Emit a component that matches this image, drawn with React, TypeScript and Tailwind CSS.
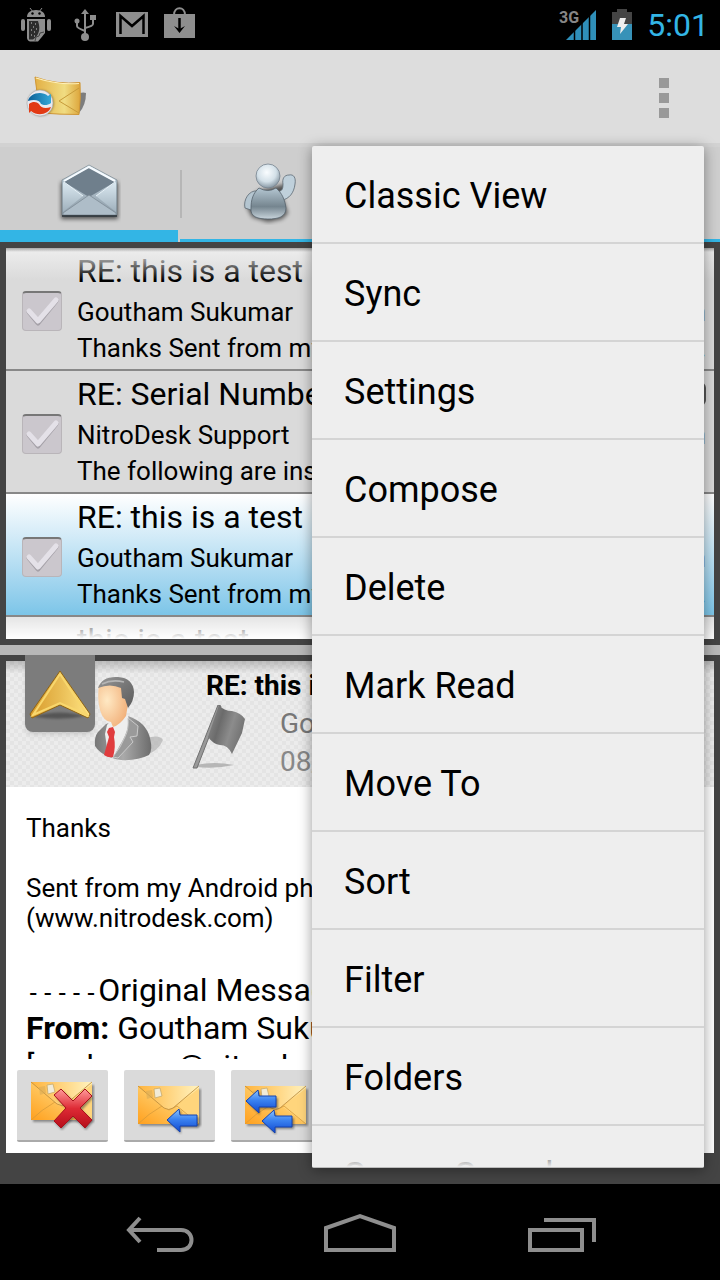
import { useState } from 'react';

const menuItems = [
  'Classic View', 'Sync', 'Settings', 'Compose', 'Delete', 'Mark Read',
  'Move To', 'Sort', 'Filter', 'Folders', 'Server Search',
];

const messages = [
  { id: 1, subject: 'RE: this is a test', from: 'Goutham Sukumar', time: '5:00 pm', preview: 'Thanks Sent from my Android phone (www.nitro' },
  { id: 2, subject: 'RE: Serial Number', from: 'NitroDesk Support', time: '4:58 pm', preview: 'The following are instructions', attachment: true },
  { id: 3, subject: 'RE: this is a test', from: 'Goutham Sukumar', time: '4:55 pm', preview: 'Thanks Sent from my Android phone (www.nitro' },
];

function StatusBar() {
  return (
    <div className="flex h-[50px] shrink-0 items-center bg-black pr-[11px] pl-3">
      <svg className="h-[50px] w-12" viewBox="12 0 48 50" fill="#8e8e8e">
        <path d="M27 17c0-4 3-7 9-7s9 3 9 7z" />
        <path d="M30 8l3 4M42 8l-3 4" stroke="#8e8e8e" strokeWidth="1" />
        <circle cx="32.500" cy="13.500" r="1.200" fill="#000" />
        <circle cx="39.500" cy="13.500" r="1.200" fill="#000" />
        <rect x="21" y="19" width="4" height="12" rx="2" />
        <rect x="47" y="19" width="4" height="12" rx="2" />
        <path d="M27 19h18v14l-4 5-3 3.500h-8q-3-1-3-4z" />
        <path d="M29 21h9c1.500 4 2 9 0 13-1 2-3 4-5 5.500h-4z" fill="#2c2c2c" />
        <path d="M31 23h1M35 24h1M33 27h1M36 29h1M31 30h1M34 32h1M31 35h1M34 36h1" stroke="#999" strokeWidth="1.500" />
        <path d="M35 41l1-4 3-1 1-3 4-1" fill="none" stroke="#444" strokeWidth="1" />
      </svg>
      <svg className="h-[50px] w-12" viewBox="60 0 48 50" fill="none" stroke="#8e8e8e" strokeWidth="2">
        <path d="M85 13v23M77 21v5q0 2 8 5M93 18v6q0 2-8 4" />
        <path d="M85 9l4 5h-8z" fill="#8e8e8e" stroke="none" />
        <circle cx="85" cy="37" r="4" fill="#8e8e8e" stroke="none" />
        <circle cx="77" cy="21" r="2.500" fill="#8e8e8e" stroke="none" />
        <path d="M90 15h6v5h-6z" fill="#8e8e8e" stroke="none" />
      </svg>
      <svg className="h-[50px] w-12" viewBox="108 0 48 50" fill="#8e8e8e">
        <path d="M116 12h32v25h-32z" />
        <path d="M120.500 34V16L132 26l11.500-10V34" fill="none" stroke="#000" strokeWidth="2.500" />
      </svg>
      <svg className="h-[50px] w-12" viewBox="156 0 48 50" fill="#8e8e8e">
        <path d="M164 14h31v24h-31z" />
        <path d="M174 15c0-9 11-9 11 0" fill="none" stroke="#8e8e8e" strokeWidth="2" />
        <path d="M179.500 18v13" stroke="#000" strokeWidth="2.500" />
        <path d="M174 26l5.500 7 5.500-7-5.500 3z" fill="#000" />
      </svg>
      <div className="ml-auto flex items-center gap-[15px]">
        <svg className="h-[50px] w-[38px]" viewBox="559 0 38 50">
          <path d="M566 40L596 10V40z" fill="#2f8fb9" />
          <path d="M574.500 8v34M582 8v34M589.500 8v34" stroke="#000" strokeWidth="1.500" />
          <text x="559" y="23" fill="#868686" fontFamily="Roboto, sans-serif" fontWeight="700" fontSize="16">3G</text>
        </svg>
        <svg className="h-[50px] w-5" viewBox="612 0 20 50">
          <path d="M612 12h5V9h10v3h5v12h-20z" fill="#444" />
          <path d="M612 24h20v16h-20z" fill="#3792b8" />
          <path d="M620 18h6l-2 6h4l-8 10 1-7h-4z" fill="#eee" />
        </svg>
        <span className="text-[32px] leading-none text-[#33b5e5]">5:01</span>
      </div>
    </div>
  );
}

function AppIcon() {
  return (
    <svg className="h-12 w-16" viewBox="24 74 64 48">
      <defs>
        <linearGradient id="gold" x1="0" x2="1">
          <stop offset="0" stopColor="#e3b045" />
          <stop offset=".65" stopColor="#f0dc82" />
          <stop offset="1" stopColor="#dda63c" />
        </linearGradient>
        <linearGradient id="swirlBlue" x1="0" y1="0" x2="1" y2="0">
          <stop offset="0" stopColor="#0b5f96" />
          <stop offset="1" stopColor="#35a8d8" />
        </linearGradient>
      </defs>
      <path d="M79 93q5-1 7 0 0 12-7 20z" fill="#666" opacity=".8" filter="blur(0.5px)" />
      <path d="M35 77q22 8 45 5.500 1 15-1 32-19 0-38-1.500-4-16-6-36z" fill="url(#gold)" stroke="#cf9737" strokeWidth="1" />
      <path d="M36 78q22 7 43 5.500" fill="none" stroke="#fff0b8" strokeWidth="1.200" />
      <path d="M79 88L59 101l20 12" fill="none" stroke="#c79b3a" strokeWidth="1" />
      <circle cx="41" cy="103" r="13" fill="#5a4a2a" opacity=".5" filter="blur(1px)" />
      <circle cx="40" cy="103" r="13" fill="#e9e9ef" stroke="#aaa" strokeWidth=".6" />
      <path d="M28 101c1-7 13-11 20-5l3-2v9c-4 3-8 2-10 1-1-4-7-5-13-3z" fill="url(#swirlBlue)" />
      <path d="M29 113v-9c4-3 8-2 10 0 2 4 6 5 12 3-2 7-13 10-20 4z" fill="#e23a14" />
    </svg>
  );
}

function MailTabIcon() {
  return (
    <svg className="h-[62px] w-16" viewBox="57 162 64 62">
      <defs>
        <linearGradient id="steel" x1="0" y1="0" x2="0" y2="1">
          <stop offset="0" stopColor="#cfe0ea" />
          <stop offset="1" stopColor="#8b9aa6" />
        </linearGradient>
        <linearGradient id="steelSide" x1="0" y1="0" x2="0" y2="1">
          <stop offset="0" stopColor="#dbe9f1" />
          <stop offset="1" stopColor="#9fb0bc" />
        </linearGradient>
      </defs>
      <path d="M61 182h57v37H61z" fill="#000" opacity=".6" filter="blur(2px)" />
      <path d="M62 180L89 165l28 15v35H62z" fill="url(#steel)" stroke="#6b7882" strokeWidth=".6" />
      <path d="M64 182l25-15 26 15-26 15z" fill="#6f7f8c" />
      <path d="M64 181L89 167l26 14" fill="none" stroke="#f6fbff" strokeWidth="2" />
      <path d="M63 182l20 14-20 16zM116 182l-20 14 20 16z" fill="url(#steelSide)" />
      <path d="M63 213l26-18 27 18v2H63z" fill="#aebdc8" stroke="#7d8b96" strokeWidth=".8" />
      <path d="M64 182l19 14M115 182l-19 14" stroke="#e9f3f9" strokeWidth="1" />
      <path d="M62 216h55" stroke="#2c343b" strokeWidth="1.500" />
    </svg>
  );
}

function PeopleTabIcon() {
  return (
    <svg className="h-[62px] w-16" viewBox="238 162 64 62">
      <defs>
        <radialGradient id="head" cx=".45" cy=".35" r=".65">
          <stop offset="0" stopColor="#fafdff" />
          <stop offset=".6" stopColor="#d3e0e8" />
          <stop offset="1" stopColor="#8797a3" />
        </radialGradient>
        <linearGradient id="torso" x1="0" y1="0" x2="0" y2="1">
          <stop offset="0" stopColor="#b4c6d2" />
          <stop offset=".6" stopColor="#75858f" />
          <stop offset="1" stopColor="#c8d4dc" />
        </linearGradient>
      </defs>
      <path d="M258 190l-12 14 6 12 16 5 14-3 6-6-6-16 11-14-12 2z" fill="#000" opacity=".6" filter="blur(2px)" />
      <path d="M277 190c5 1 6-2 6-7-1-5 1-9 6-9 5-1 7 3 6 9-1 9-6 15-13 16z" fill="#bfd0db" stroke="#5d6973" strokeWidth=".8" />
      <path d="M257 190c-8-1-14 9-12 17l6 2z" fill="#b4c5d0" stroke="#5d6973" strokeWidth=".8" />
      <path d="M259 187q9 5 17 0c6 5 9 12 10 20 0 9-8 11-18 11s-18-2-17-11c0-8 2-15 8-20z" fill="url(#torso)" stroke="#56626c" strokeWidth=".8" />
      <circle cx="268" cy="175" r="12" fill="url(#head)" stroke="#77848f" strokeWidth=".8" />
    </svg>
  );
}

function Tabs() {
  return (
    <nav className="flex h-[99px] shrink-0 border-t-4 border-[#d2d2d2] bg-[#cecece]">
      <button aria-label="Mail" className="mr-[2px] flex flex-1 items-center justify-center border-b-12 border-[#33b5e5] pt-2">
        <MailTabIcon />
      </button>
      <button aria-label="Contacts" className="flex flex-1 items-center border-b-3 border-[#33b5e5] pt-[2px]">
        <span className="h-12 w-[2px] bg-[#b6b6b6]" />
        <span className="flex flex-1 justify-center"><PeopleTabIcon /></span>
      </button>
      <button aria-label="Calendar" className="flex-1 border-b-3 border-[#33b5e5]" />
      <button aria-label="Tasks" className="w-[184px] border-b-3 border-[#33b5e5]" />
    </nav>
  );
}

function CheckBox({ label }: { label: string }) {
  return (
    <label className="mt-1 grid h-10 w-10 shrink-0">
      <input
        type="checkbox"
        aria-label={label}
        className="col-start-1 row-start-1 h-10 w-10 appearance-none rounded border border-t-2 border-[#b9b5b9] border-t-[#777] bg-[#cbc7cd]"
      />
      <svg className="pointer-events-none col-start-1 row-start-1 h-10 w-10" viewBox="0 0 40 40" fill="none" strokeLinecap="round" strokeLinejoin="round">
        <path d="M7 21l9 11L34 10" stroke="#a5a1a8" strokeWidth="5" />
        <path d="M7 20l9 10L34 9" stroke="#e4e1e8" strokeWidth="5" />
      </svg>
    </label>
  );
}

function MessageList() {
  return (
    <div className="relative mx-[6px] mt-[6px] h-[391px] shrink-0 overflow-hidden bg-[#dadada]">
      {messages.map((m) => (
        <div
          key={m.id}
          className={`flex h-[123px] items-center gap-[15px] border-b-2 border-[#888] pr-2 pl-4 ${m.id === 3 ? 'bg-linear-to-b from-white to-[#7cc5e8]' : ''}`}
        >
          <CheckBox label={`Select ${m.subject}`} />
          <div className="min-w-0 flex-1">
            <div className="mb-1 flex items-center justify-between text-[32px] leading-[38px]">
              <span>{m.subject}</span>
              {m.attachment && <span className="h-6 w-3 rounded-md border-2 border-[#555]" />}
            </div>
            <div className="flex justify-between text-[26px] leading-9">
              <span>{m.from}</span>
              <span className="text-[#777]">{m.time}</span>
            </div>
            <div className="flex justify-between text-[26px] leading-9 whitespace-nowrap">
              <span>{m.preview}</span>
              {!m.attachment && <span>...</span>}
            </div>
          </div>
        </div>
      ))}
      <div className="pt-1 pl-[71px] text-[32px] leading-[38px]">this is a test</div>
      {/* fading edges of the scroll area */}
      <div className="absolute inset-x-0 top-0 h-8 bg-linear-to-b from-[#eeeeee] to-transparent" />
      <div className="absolute inset-x-0 bottom-0 h-[22px] bg-linear-to-b from-white/30 to-white" />
      <div className="absolute inset-x-0 top-0 h-1 bg-linear-to-b from-black/30 to-transparent" />
    </div>
  );
}

function SenderPhoto() {
  return (
    <svg className="h-[88px] w-[72px]" viewBox="93 675 72 88">
      <defs>
        <radialGradient id="face" cx=".3" cy=".4" r=".8">
          <stop offset="0" stopColor="#ffe9c4" />
          <stop offset="1" stopColor="#f0aa72" />
        </radialGradient>
        <linearGradient id="suit">
          <stop offset="0" stopColor="#777" />
          <stop offset=".5" stopColor="#aaa" />
          <stop offset="1" stopColor="#6c6c6c" />
        </linearGradient>
        <linearGradient id="hair" x1="0" y1="0" x2="1" y2="1">
          <stop offset="0" stopColor="#999" />
          <stop offset=".5" stopColor="#777" />
          <stop offset="1" stopColor="#5c5c5c" />
        </linearGradient>
      </defs>
      <path d="M146 738q14-4 17 2-4 10-16 15z" fill="#aaa" opacity=".6" />
      <path d="M95 746q-1-9 3-14l8-8 22-8q18 6 22 22 3 12-1 17-12 6-28 5-19-3-26-14z" fill="url(#suit)" />
      <path d="M105 734l2-9 4-5 17-5q3 12-8 30l-7 13-5-3z" fill="#eee" />
      <path d="M128 718l10 8-1 10-7 1 3 5-15 16-5-1q8-10 12-20 4-8 3-19z" fill="#9a9a9a" stroke="#c9c9c9" strokeWidth="1" />
      <path d="M109 728l4-1 2 5-1 5q2 10-1 20-5 1-9-2l5-18-2-5z" fill="#e03c3e" />
      <path d="M99 685q13-6 25 2l4 17-2 12q-6 9-13 11l-2-5q-8-1-11-12-3-12-1-25z" fill="url(#face)" />
      <path d="M98 688q4-12 20-11 15 1 16 15 0 9-6 16l-3-9-3-1-1-10q-11-5-23 0z" fill="url(#hair)" />
      <path d="M102 684q10-5 22-2" fill="none" stroke="#b5b5b5" strokeWidth="1.500" />
    </svg>
  );
}

function Flag() {
  return (
    <svg className="h-[68px] w-[56px]" viewBox="191 704 56 68">
      <defs>
        <linearGradient id="cloth" x1="0" y1="0" x2="1" y2=".4">
          <stop offset="0" stopColor="#929292" />
          <stop offset=".4" stopColor="#6b6b6b" />
          <stop offset=".7" stopColor="#8c8c8c" />
          <stop offset="1" stopColor="#737373" />
        </linearGradient>
      </defs>
      <path d="M196 764q18-4 38 0-18 4-38 2z" fill="#aaa" opacity=".8" />
      <path d="M218 704l3 1-24 62h-4z" fill="#999" stroke="#707070" strokeWidth="1" />
      <path d="M219 704q5 6 13 6 9 2 13 8l-3 14-10 21q-4-9-12-9-7-1-12-8z" fill="url(#cloth)" />
    </svg>
  );
}

function IconGradients() {
  return (
    <svg className="h-0 w-0" aria-hidden="true">
      <defs>
        <linearGradient id="paper" x1="0" y1="1" x2="1" y2="0">
          <stop offset="0" stopColor="#ffa01e" />
          <stop offset=".5" stopColor="#ffc760" />
          <stop offset="1" stopColor="#fff0b4" />
        </linearGradient>
        <linearGradient id="flap" x1="0" y1="0" x2="1" y2="0">
          <stop offset="0" stopColor="#ffb43c" />
          <stop offset="1" stopColor="#fff3c0" />
        </linearGradient>
        <linearGradient id="blue" x1="0" y1="0" x2="0" y2="1">
          <stop offset="0" stopColor="#8cc4ff" />
          <stop offset=".45" stopColor="#3b82f0" />
          <stop offset="1" stopColor="#0f48cf" />
        </linearGradient>
        <linearGradient id="red" x1="0" y1="0" x2="0" y2="1">
          <stop offset="0" stopColor="#ff9a9a" />
          <stop offset=".5" stopColor="#de2a35" />
          <stop offset="1" stopColor="#b50e1a" />
        </linearGradient>
      </defs>
    </svg>
  );
}

function Envelope() {
  return (
    <>
      <path d="M2 4h61v37H2z" fill="#555" opacity=".6" filter="blur(1px)" />
      <path d="M0 1h61v38H0z" fill="url(#paper)" />
      <path d="M61 39V3L38 22z" fill="#ffd57c" />
      <path d="M0 39q10-10 24-18l7 4 8-4 22 18" fill="none" stroke="#d79a3a" strokeWidth=".8" />
      <path d="M0 1h61L35 23q-4 3-9 0z" fill="url(#flap)" />
      <path d="M0 1l26 22q5 3 9 0L61 1" fill="none" stroke="#b98a3c" strokeWidth="1" opacity=".8" />
      <path d="M16 4l6-1 2 8-7 2z" fill="#f1ebd8" stroke="#c7ab6c" strokeWidth=".8" />
      <path d="M8 6l6-1 1 7-6 2z" fill="#d9ab57" opacity=".6" />
    </>
  );
}

function BlueArrow({ x, y }: { x: number; y: number }) {
  return (
    <g transform={`translate(${x} ${y})`}>
      <path d="M2 14L14 2v7h18v11H14v6z" fill="#333" opacity=".5" filter="blur(1px)" />
      <path d="M0 12L12 1l1 6h17v11H13v6z" fill="url(#blue)" stroke="#1443b0" strokeWidth="1" strokeLinejoin="round" />
    </g>
  );
}

function MailActions() {
  const button = 'flex h-[72px] w-[91px] items-center justify-center rounded-xs border-b-2 border-[#aaa] bg-[#dadada]';
  return (
    <div className="flex shrink-0 gap-4 p-[11px]">
      <button aria-label="Delete message" className={button}>
        <svg className="h-[52px] w-16" viewBox="0 -2 64 52">
          <Envelope />
          <path d="M25 16l7-6 12 12 11-12 7 7-11 12 11 12-7 8-12-12-12 12-7-7 12-13z" fill="#333" opacity=".5" filter="blur(1px)" />
          <path d="M23 14l7-6 12 12L54 8l7 7-12 12 12 12-7 8-12-12-12 12-7-7 12-13z" fill="url(#red)" stroke="#a8101b" strokeWidth="1" strokeLinejoin="round" />
        </svg>
      </button>
      <button aria-label="Reply" className={button}>
        <svg className="h-[60px] w-16" viewBox="0 -10 64 60">
          <Envelope />
          <BlueArrow x={29} y={23} />
        </svg>
      </button>
      <button aria-label="Reply all" className={button}>
        <svg className="h-[60px] w-16" viewBox="0 -10 64 60">
          <Envelope />
          <BlueArrow x={1} y={4} />
          <BlueArrow x={17} y={24} />
        </svg>
      </button>
    </div>
  );
}

function MessageView() {
  return (
    <div className="relative mx-[6px] mt-[6px] mb-[31px] flex min-h-0 flex-1 flex-col bg-white">
      <div className="h-[126px] shrink-0 bg-[repeating-conic-gradient(#e4e4e4_0_25%,#ececec_0_50%)] bg-[length:8px_8px]">
        <div className="flex h-full bg-linear-to-b from-black/20 via-transparent via-10% pt-[6px] pl-[87px]">
          <div className="pt-2"><SenderPhoto /></div>
          <div className="pl-[26px] text-[28px] leading-[38px] whitespace-nowrap">
            <h1 className="pl-[15px] font-bold">RE: this is a test</h1>
            <div className="flex gap-[33px] text-[#777]">
              <Flag />
              <div>
                <p>Goutham Sukumar</p>
                <p className="text-[#888]">08/22/2012</p>
              </div>
            </div>
          </div>
        </div>
      </div>
      <button aria-label="Expand message" className="absolute -top-[6px] left-[19px] flex h-[77px] w-[70px] items-center justify-center rounded-b-lg bg-[#7c7c7c] shadow-md">
        <svg className="h-16 w-16" viewBox="28 662 64 64">
          <defs>
            <linearGradient id="arrowGold">
              <stop offset="0" stopColor="#d99b2b" />
              <stop offset=".5" stopColor="#e9bd55" />
              <stop offset="1" stopColor="#ffe483" />
            </linearGradient>
          </defs>
          <path d="M35 716q24-7 50 0-24 5-50 1z" fill="#4c4c4c" opacity=".8" filter="blur(1px)" />
          <path d="M60 671L30 714l2 4 28-13 28 13 2-4z" fill="url(#arrowGold)" stroke="#8f6414" strokeWidth="1" strokeLinejoin="round" />
          <path d="M60 674L33 715l27-12 27 12z" fill="none" stroke="#f8d76d" strokeWidth="2" />
        </svg>
      </button>
      <div className="min-h-0 flex-1 overflow-hidden px-5 pt-[26px]">
        <div className="text-[26px] leading-[30px]">
          <p className="mb-[30px]">Thanks</p>
          <p>Sent from my Android phone</p>
          <p>(www.nitrodesk.com)</p>
        </div>
        <div className="pt-[38px] text-[32px] leading-[38px] whitespace-nowrap">
          <p>
            <span className="font-['DejaVu_Sans_Mono',monospace] text-[24px] leading-none">-----</span>
            Original Message
            <span className="font-['DejaVu_Sans_Mono',monospace] text-[24px] leading-none">-----</span>
          </p>
          <p><b>From:</b> Goutham Sukumar</p>
          <p>[gsukumar@nitrodesk.com]</p>
        </div>
      </div>
      <MailActions />
    </div>
  );
}

function OverflowMenu() {
  return (
    <div role="menu" className="absolute top-[146px] right-4 bottom-28 w-[392px] overflow-hidden rounded-xs border-b border-[#bbb] bg-[#eeeeee] shadow-[0_2px_14px_rgba(0,0,0,0.4)]">
      {menuItems.map((item) => (
        <button key={item} role="menuitem" className="block h-[98px] w-full border-b-2 border-[#d4d4d4] px-8 pt-1 text-left text-[36px]">
          {item}
        </button>
      ))}
      <div className="absolute inset-x-0 bottom-0 h-6 bg-linear-to-b from-transparent to-[#eeeeee]" />
    </div>
  );
}

function NavBar() {
  return (
    <div className="flex h-24 shrink-0 items-center justify-center gap-[124px] bg-black">
      <button aria-label="Back">
        <svg className="h-12 w-[72px]" viewBox="124 1208 72 48" fill="none" stroke="#8e8e8e" strokeWidth="4">
          <path d="M140 1218l-11 12 11 12" />
          <path d="M131 1230h50c14 0 14 20 0 20h-24" />
        </svg>
      </button>
      <button aria-label="Home">
        <svg className="h-12 w-[80px]" viewBox="320 1208 80 48" fill="none" stroke="#8e8e8e" strokeWidth="4">
          <path d="M326 1250v-22l34-12 34 12v22z" />
        </svg>
      </button>
      <button aria-label="Recent apps">
        <svg className="h-12 w-[72px]" viewBox="524 1208 72 48" fill="none" stroke="#8e8e8e" strokeWidth="4">
          <path d="M530 1230h52v20h-52zM544 1220h50v22" />
        </svg>
      </button>
    </div>
  );
}

export default function App() {
  const [menuOpen, setMenuOpen] = useState(true);

  return (
    <div className="relative flex h-screen flex-col overflow-hidden bg-[#444444] font-['Roboto',sans-serif] text-black">
      <IconGradients />
      <StatusBar />
      <header className="flex h-[93px] shrink-0 items-center justify-between bg-[#dddddd] pt-[2px] pr-[51px] pl-6">
        <AppIcon />
        <button aria-label="More options" onClick={() => setMenuOpen(!menuOpen)} className="flex flex-col gap-[5px]">
          <span className="h-[10px] w-[10px] bg-[#999]" />
          <span className="h-[10px] w-[10px] bg-[#999]" />
          <span className="h-[10px] w-[10px] bg-[#999]" />
        </button>
      </header>
      <Tabs />
      <MessageList />
      <div className="mt-[6px] h-[10px] shrink-0 bg-[#b8b8b8]" />
      <MessageView />
      <NavBar />
      {menuOpen && <OverflowMenu />}
    </div>
  );
}
